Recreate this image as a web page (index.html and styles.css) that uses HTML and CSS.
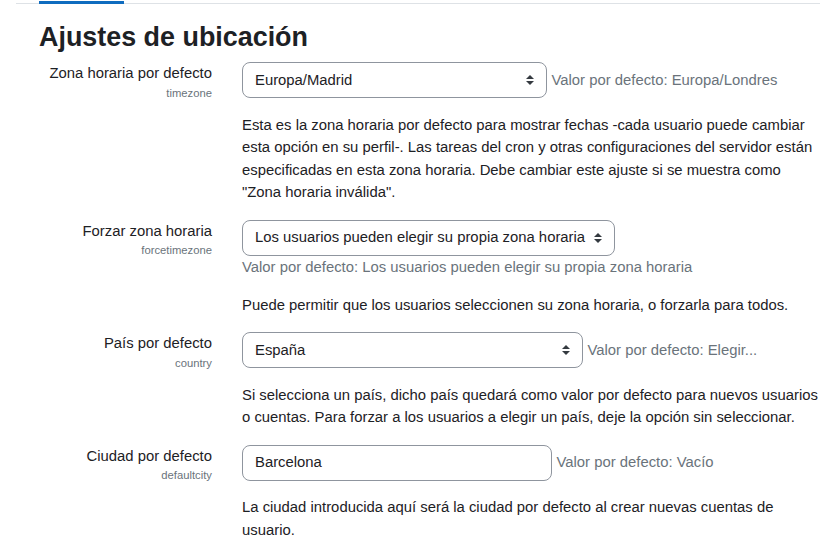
FILE: index.html
```html
<!DOCTYPE html>
<html lang="es">
<head>
<meta charset="utf-8">
<title>Ajustes de ubicación</title>
<link rel="stylesheet" href="styles.css">
</head>
<body>
<div class="page">
  <div class="tabs"><span class="tab-active"></span></div>
  <div class="content">
    <h2 class="title">Ajustes de ubicación</h2>

    <div class="setting">
      <div class="label-col">
        <div class="label">Zona horaria por defecto</div>
        <div class="key">timezone</div>
      </div>
      <div class="field-col">
        <div class="control-line">
          <div class="select w1"><span>Europa/Madrid</span><svg class="arrow" width="8" height="10" viewBox="0 0 4 5"><path fill="#343a40" d="M2 0L0 2h4zm0 5L0 3h4z"/></svg></div>
          <span class="default">Valor por defecto: Europa/Londres</span>
        </div>
        <p class="desc">Esta es la zona horaria por defecto para mostrar fechas -cada usuario puede cambiar esta opción en su perfil-. Las tareas del cron y otras configuraciones del servidor están especificadas en esta zona horaria. Debe cambiar este ajuste si se muestra como "Zona horaria inválida".</p>
      </div>
    </div>

    <div class="setting">
      <div class="label-col">
        <div class="label">Forzar zona horaria</div>
        <div class="key">forcetimezone</div>
      </div>
      <div class="field-col">
        <div class="select w2"><span>Los usuarios pueden elegir su propia zona horaria</span><svg class="arrow" width="8" height="10" viewBox="0 0 4 5"><path fill="#343a40" d="M2 0L0 2h4zm0 5L0 3h4z"/></svg></div>
        <div class="default below">Valor por defecto: Los usuarios pueden elegir su propia zona horaria</div>
        <p class="desc">Puede permitir que los usuarios seleccionen su zona horaria, o forzarla para todos.</p>
      </div>
    </div>

    <div class="setting">
      <div class="label-col">
        <div class="label">País por defecto</div>
        <div class="key">country</div>
      </div>
      <div class="field-col">
        <div class="control-line">
          <div class="select w3"><span>España</span><svg class="arrow" width="8" height="10" viewBox="0 0 4 5"><path fill="#343a40" d="M2 0L0 2h4zm0 5L0 3h4z"/></svg></div>
          <span class="default">Valor por defecto: Elegir...</span>
        </div>
        <p class="desc">Si selecciona un país, dicho país quedará como valor por defecto para nuevos usuarios o cuentas. Para forzar a los usuarios a elegir un país, deje la opción sin seleccionar.</p>
      </div>
    </div>

    <div class="setting">
      <div class="label-col">
        <div class="label">Ciudad por defecto</div>
        <div class="key">defaultcity</div>
      </div>
      <div class="field-col">
        <div class="control-line">
          <div class="input w4">Barcelona</div>
          <span class="default">Valor por defecto: Vacío</span>
        </div>
        <p class="desc">La ciudad introducida aquí será la ciudad por defecto al crear nuevas cuentas de usuario.</p>
      </div>
    </div>
  </div>
</div>
</body>
</html>
```

FILE: styles.css
```css
html, body {
  margin: 0;
  padding: 0;
  background: #fff;
}
body {
  font-family: "Liberation Sans", Arial, sans-serif;
  font-size: 14.85px;
  line-height: 22.5px;
  color: #1d2125;
  overflow: hidden;
}
.page {
  padding-left: 16px;
}
.tabs {
  height: 3px;
  border-bottom: 1px solid #dee2e6;
  padding-left: 23px;
  display: flex;
}
.tab-active {
  display: block;
  width: 85px;
  height: 3px;
  margin-top: 1px;
  background: #0f6cbf;
}
.content {
  padding-left: 23px;
}
.title {
  margin: 17px 0 9px;
  font-size: 26.9px;
  line-height: 32px;
  font-weight: 700;
  color: #1d2125;
}
.setting {
  display: grid;
  grid-template-columns: 173px 1fr;
  column-gap: 30px;
  margin-bottom: 15.75px;
}
.label-col {
  text-align: right;
}
.label {
  line-height: 22.5px;
}
.key {
  font-size: 11.25px;
  color: #6a737b;
  line-height: 16.5px;
  margin-top: 0;
}
.control-line {
  display: flex;
  align-items: center;
  gap: 4.5px;
}
.select, .input {
  box-sizing: border-box;
  height: 36px;
  border: 1px solid #8f959e;
  border-radius: 8px;
  padding: 0 12px;
  display: flex;
  align-items: center;
  color: #1d2125;
  flex: none;
  white-space: nowrap;
}
.select {
  justify-content: space-between;
}
.arrow {
  flex: none;
  margin-left: 8px;
}
.w1 { width: 305px; }
.w2 { width: 373px; }
.w3 { width: 341px; }
.w4 { width: 310px; }
.default {
  color: #6a737b;
}
.below {
  line-height: 22.5px;
}
.desc {
  margin: 15.75px 0 0;
  line-height: 22.5px;
}
```
